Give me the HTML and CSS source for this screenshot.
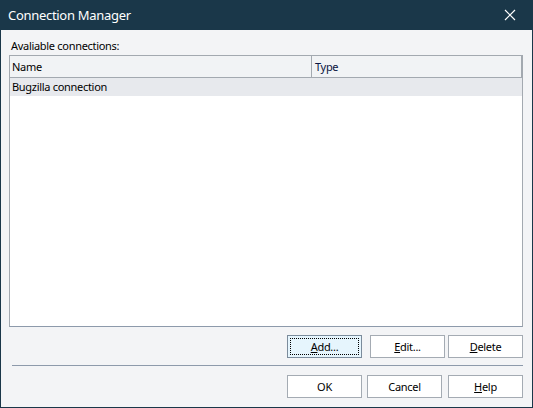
FILE: index.html
```html
<!DOCTYPE html>
<html>
<head>
<meta charset="utf-8">
<link rel="stylesheet" href="styles.css">
</head>
<body>
<div class="window">
  <div class="titlebar">
    <span class="title">Connection Manager</span>
    <svg class="close" width="12" height="12" viewBox="0 0 12 12">
      <path d="M1 1 L11 11 M11 1 L1 11" stroke="#ffffff" stroke-width="1.2" fill="none"/>
    </svg>
  </div>
  <div class="content">
    <div class="label">Avaliable connections:</div>
    <div class="list">
      <div class="list-header">
        <div class="col col-name">Name</div>
        <div class="col col-type">Type</div>
      </div>
      <div class="list-row selected">
        <div class="cell cell-name">Bugzilla connection</div>
        <div class="cell cell-type"></div>
      </div>
    </div>
    <div class="actions">
      <button class="btn btn-focus btn-add"><span class="focus"><u>A</u>dd...</span></button>
      <button class="btn btn-edit"><span class="focus-none"><u>E</u>dit...</span></button>
      <button class="btn"><span class="focus-none"><u>D</u>elete</span></button>
    </div>
    <div class="separator"></div>
    <div class="actions footer">
      <button class="btn btn-ok"><span class="focus-none">OK</span></button>
      <button class="btn btn-cancel"><span class="focus-none">Cancel</span></button>
      <button class="btn"><span class="focus-none"><u>H</u>elp</span></button>
    </div>
  </div>
</div>
</body>
</html>
```

FILE: styles.css
```css
* { box-sizing: border-box; }
html, body { margin: 0; padding: 0; background: #1a3749; }
body { font-family: "Noto Sans", "Open Sans", sans-serif; font-size: 11px; letter-spacing: -0.3px; color: #000; }

.window {
  width: 533px;
  height: 408px;
  background: #f3f4f6;
  border: 1px solid #1a3749;
  border-top: none;
  display: flex;
  flex-direction: column;
}

.titlebar {
  height: 30px;
  margin: 0 -1px;
  background: #1a3749;
  color: #ffffff;
  display: flex;
  align-items: center;
  justify-content: space-between;
  padding: 0 17px 0 8px;
  flex: none;
}
.title { font-size: 13px; letter-spacing: -0.3px; line-height: 30px; }
.close { display: block; }

.content {
  flex: 1;
  display: flex;
  flex-direction: column;
  padding: 0 9px 0 8px;
}

.label {
  padding: 8px 0 0 2px;
  height: 24px;
  line-height: 16px;
  margin-bottom: 1px;
}

.list {
  height: 272px;
  border: 1px solid #a3a9b0;
  border-bottom-color: #8d9aab;
  background: #ffffff;
}

.list-header {
  display: flex;
  height: 22px;
  background: #f1f3f5;
  border-bottom: 1px solid #a3a9b0;
}
.col {
  line-height: 21px;
  padding-left: 2px;
  white-space: nowrap;
}
.col-name { width: 302px; border-right: 1px solid #a3a9b0; }
.col-type { flex: 1; padding-left: 3px; border-right: 1px solid #a3a9b0; color: #0a1440; }

.list-row { display: flex; height: 18px; }
.list-row.selected { background: #e7e9ed; }
.cell { line-height: 18px; padding-left: 2px; white-space: nowrap; }
.cell-name { width: 303px; }
.cell-type { flex: 1; }

.actions {
  display: flex;
  justify-content: flex-end;
  margin-top: 8px;
  height: 23px;
}
.footer { margin-top: 9px; }

.btn {
  width: 75px;
  height: 23px;
  padding: 0;
  margin: 0;
  font-family: inherit;
  font-size: 11px;
  letter-spacing: -0.3px;
  color: #000;
  background: #ffffff;
  border: 1px solid #a4abb3;
  display: flex;
  align-items: center;
  justify-content: center;
}
.btn-add { margin-right: 8px; }
.btn-edit { margin-right: 3px; }
.btn-ok { margin-right: 5px; }
.btn-cancel { margin-right: 6px; }

.btn-focus {
  background: #e6f5fd;
  border-color: #7b8b9b;
  padding: 2px;
}
.focus {
  flex: 1;
  align-self: stretch;
  border: 1px dotted #000;
  display: flex;
  align-items: center;
  justify-content: center;
}

.separator {
  height: 1px;
  margin: 7px 0 0 3px;
  background: #8d9aab;
}
```
